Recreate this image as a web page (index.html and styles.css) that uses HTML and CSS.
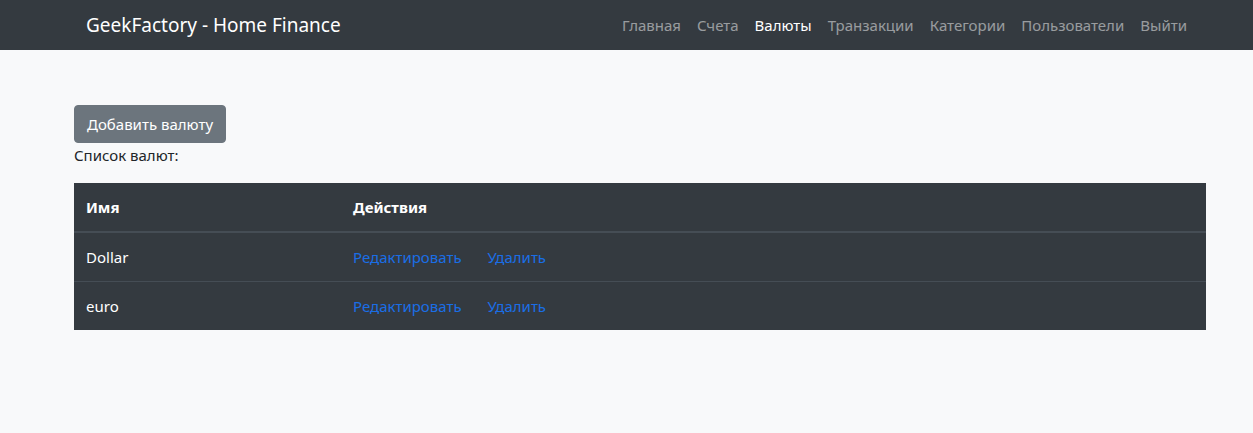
FILE: index.html
```html
<!DOCTYPE html>
<html lang="ru">
<head>
<meta charset="utf-8">
<title>GeekFactory - Home Finance</title>
<link rel="stylesheet" href="styles.css">
</head>
<body>
<nav class="navbar">
  <a class="brand" href="#">GeekFactory - Home Finance</a>
  <ul class="nav">
    <li><a class="nav-link" href="#">Главная</a></li>
    <li><a class="nav-link" href="#">Счета</a></li>
    <li><a class="nav-link active" href="#">Валюты</a></li>
    <li><a class="nav-link" href="#">Транзакции</a></li>
    <li><a class="nav-link" href="#">Категории</a></li>
    <li><a class="nav-link" href="#">Пользователи</a></li>
    <li><a class="nav-link" href="#">Выйти</a></li>
  </ul>
</nav>
<main class="content">
  <a class="btn" href="#">Добавить валюту</a>
  <p class="caption">Список валют:</p>
  <table class="table">
    <thead>
      <tr><th class="col-name">Имя</th><th>Действия</th></tr>
    </thead>
    <tbody>
      <tr>
        <td>Dollar</td>
        <td><a class="action" href="#">Редактировать</a><a class="action" href="#">Удалить</a></td>
      </tr>
      <tr>
        <td>euro</td>
        <td><a class="action" href="#">Редактировать</a><a class="action" href="#">Удалить</a></td>
      </tr>
    </tbody>
  </table>
</main>
</body>
</html>
```

FILE: styles.css
```css
* { box-sizing: border-box; }
html, body { margin: 0; padding: 0; }
body {
  background: #f8f9fa;
  color: #212529;
  font-family: "Noto Sans", "Open Sans", sans-serif;
  font-size: 15px;
  line-height: 24px;
}
a { text-decoration: none; }

.navbar {
  height: 50px;
  background: #343a40;
  display: flex;
  align-items: center;
  justify-content: space-between;
  padding: 0 58px 0 86px;
}
.brand {
  color: #fff;
  font-size: 19px;
  line-height: 30px;
}
.nav {
  list-style: none;
  margin: 0;
  padding: 0;
  display: flex;
}
.nav-link {
  display: block;
  padding: 8px 8px;
  color: rgba(255,255,255,0.5);
  font-size: 15px;
}
.nav-link.active { color: #fff; }

.content {
  padding: 55px 0 0 74px;
  width: 1206px;
}
.btn {
  display: inline-block;
  background: #6c757d;
  color: #fff;
  border: 1px solid #6c757d;
  border-radius: 4px;
  padding: 6px 12px;
  line-height: 24px;
  font-size: 15px;
}
.caption {
  margin: 0 0 16px;
}
.table {
  width: 100%;
  border-collapse: collapse;
  background: #343a40;
  color: #fff;
}
.table th, .table td {
  text-align: left;
  padding: 12px 12px;
  border-top: 1px solid #454d55;
  vertical-align: top;
}
.table thead th {
  border-top: none;
  border-bottom: 2px solid #454d55;
  font-weight: 700;
}
.col-name { width: 267px; }
.action {
  color: #1a6ee6;
  margin-right: 26px;
}
```
